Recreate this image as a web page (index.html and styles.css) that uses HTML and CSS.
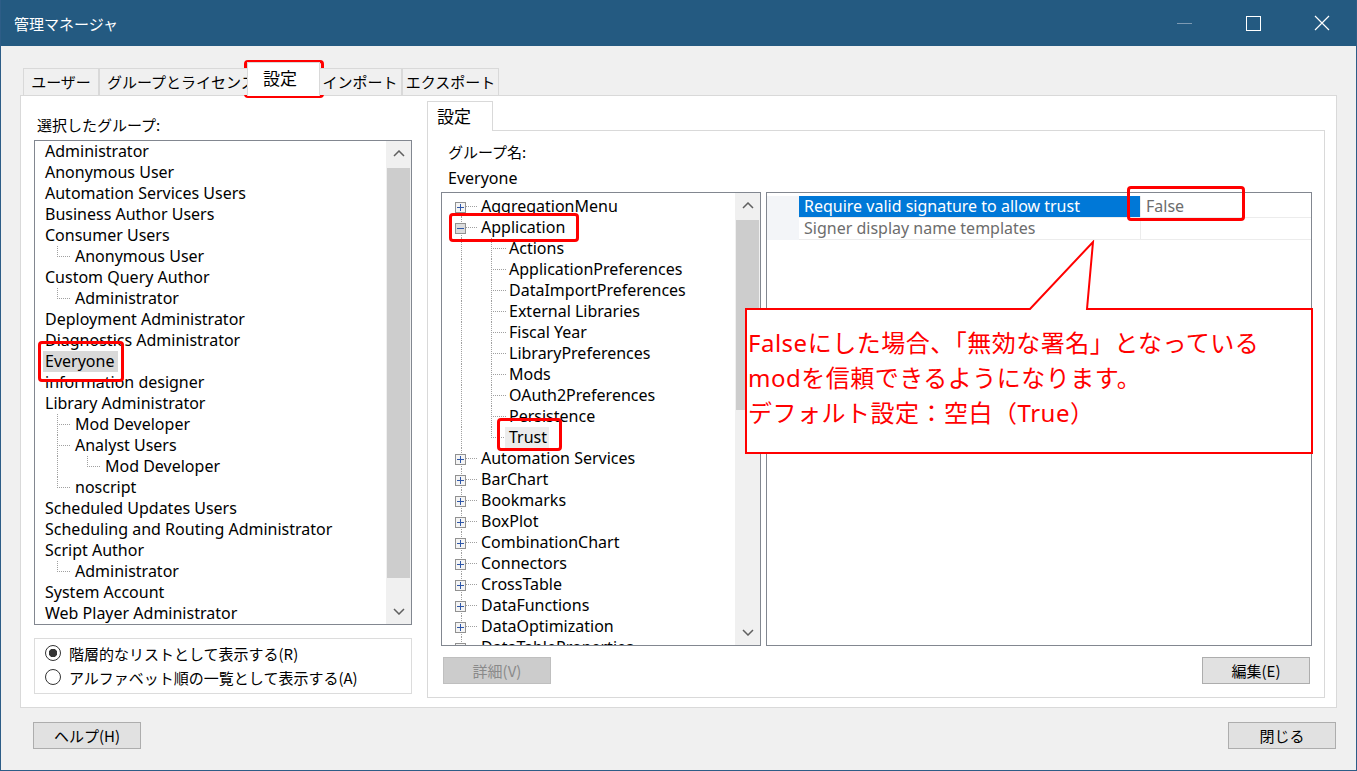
FILE: index.html
```html
<!DOCTYPE html>
<html lang="ja">
<head>
    <meta charset="UTF-8">
    <title>管理マネージャ</title>
    <link rel="stylesheet" href="styles.css">
</head>
<body>

<div class="window">

    <div class="titlebar">
        <span class="title">管理マネージャ</span>
        <div class="winbtns">
            <span class="wb"><svg width="16" height="16" viewBox="0 0 16 16"><path d="M1 8.5 H16" stroke="#7d9ab3" stroke-width="1"/></svg></span>
            <span class="wb"><svg width="16" height="16" viewBox="0 0 16 16"><rect x="1.5" y="1.5" width="14" height="14" fill="none" stroke="#fff" stroke-width="1"/></svg></span>
            <span class="wb"><svg width="16" height="16" viewBox="0 0 16 16"><path d="M1 1 L15 15 M15 1 L1 15" stroke="#fff" stroke-width="1.2"/></svg></span>
        </div>
    </div>

    <div class="content">

        <div class="tabs">
            <div class="tab tab-user">ユーザー</div>
            <div class="tab tab-group">グループとライセンス</div>
            <div class="tab active">設定</div>
            <div class="tab tab-import">インポート</div>
            <div class="tab tab-export">エクスポート</div>
        </div>

        <div class="panel">

            <!-- left: groups -->
            <div class="left">
                <div class="label">選択したグループ:</div>
                <div class="listbox">
                    <div class="list">
                        <div class="row">Administrator</div>
                        <div class="row">Anonymous User</div>
                        <div class="row">Automation Services Users</div>
                        <div class="row">Business Author Users</div>
                        <div class="row">Consumer Users</div>
                        <div class="row"><span class="lc lc-ell"></span>Anonymous User</div>
                        <div class="row">Custom Query Author</div>
                        <div class="row"><span class="lc lc-ell"></span>Administrator</div>
                        <div class="row">Deployment Administrator</div>
                        <div class="row">Diagnostics Administrator</div>
                        <div class="row"><span class="hl">Everyone</span></div>
                        <div class="row">information designer</div>
                        <div class="row">Library Administrator</div>
                        <div class="row"><span class="lc lc-tee"></span>Mod Developer</div>
                        <div class="row"><span class="lc lc-tee"></span>Analyst Users</div>
                        <div class="row"><span class="lc lc-bar"></span><span class="lc lc-ell"></span>Mod Developer</div>
                        <div class="row"><span class="lc lc-ell"></span>noscript</div>
                        <div class="row">Scheduled Updates Users</div>
                        <div class="row">Scheduling and Routing Administrator</div>
                        <div class="row">Script Author</div>
                        <div class="row"><span class="lc lc-ell"></span>Administrator</div>
                        <div class="row">System Account</div>
                        <div class="row">Web Player Administrator</div>
                    </div>
                    <div class="vscroll">
                        <div class="sb-btn"><svg width="12" height="7" viewBox="0 0 12 7"><path d="M1 6 L6 1 L11 6" fill="none" stroke="#606060" stroke-width="1.5"/></svg></div>
                        <div class="sb-track"><div class="sb-thumb thumb-groups"></div></div>
                        <div class="sb-btn"><svg width="12" height="7" viewBox="0 0 12 7"><path d="M1 1 L6 6 L11 1" fill="none" stroke="#606060" stroke-width="1.5"/></svg></div>
                    </div>
                </div>
                <div class="radios">
                    <div class="radio"><span class="dot checked"></span>階層的なリストとして表示する(R)</div>
                    <div class="radio"><span class="dot"></span>アルファベット順の一覧として表示する(A)</div>
                </div>
            </div>

            <!-- right: settings -->
            <div class="right">
                <div class="subtabs">
                    <div class="subtab">設定</div>
                </div>
                <div class="subpanel">
                    <div class="field-label">グループ名:</div>
                    <div class="field-value">Everyone</div>

                    <div class="split">
                        <div class="treebox">
                            <div class="tree">
                                <div class="trow"><span class="tc tc-first"><span class="exp plus"></span></span>AggregationMenu</div>
                                <div class="trow"><span class="tc"><span class="exp minus"></span></span>Application</div>
                                <div class="trow"><span class="tc tc-bar"></span><span class="tb tb-tee"></span>Actions</div>
                                <div class="trow"><span class="tc tc-bar"></span><span class="tb tb-tee"></span>ApplicationPreferences</div>
                                <div class="trow"><span class="tc tc-bar"></span><span class="tb tb-tee"></span>DataImportPreferences</div>
                                <div class="trow"><span class="tc tc-bar"></span><span class="tb tb-tee"></span>External Libraries</div>
                                <div class="trow"><span class="tc tc-bar"></span><span class="tb tb-tee"></span>Fiscal Year</div>
                                <div class="trow"><span class="tc tc-bar"></span><span class="tb tb-tee"></span>LibraryPreferences</div>
                                <div class="trow"><span class="tc tc-bar"></span><span class="tb tb-tee"></span>Mods</div>
                                <div class="trow"><span class="tc tc-bar"></span><span class="tb tb-tee"></span>OAuth2Preferences</div>
                                <div class="trow"><span class="tc tc-bar"></span><span class="tb tb-tee"></span>Persistence</div>
                                <div class="trow"><span class="tc tc-bar"></span><span class="tb tb-ell"></span><span class="hl-tree">Trust</span></div>
                                <div class="trow"><span class="tc"><span class="exp plus"></span></span>Automation Services</div>
                                <div class="trow"><span class="tc"><span class="exp plus"></span></span>BarChart</div>
                                <div class="trow"><span class="tc"><span class="exp plus"></span></span>Bookmarks</div>
                                <div class="trow"><span class="tc"><span class="exp plus"></span></span>BoxPlot</div>
                                <div class="trow"><span class="tc"><span class="exp plus"></span></span>CombinationChart</div>
                                <div class="trow"><span class="tc"><span class="exp plus"></span></span>Connectors</div>
                                <div class="trow"><span class="tc"><span class="exp plus"></span></span>CrossTable</div>
                                <div class="trow"><span class="tc"><span class="exp plus"></span></span>DataFunctions</div>
                                <div class="trow"><span class="tc"><span class="exp plus"></span></span>DataOptimization</div>
                                <div class="trow"><span class="tc"><span class="exp plus"></span></span>DataTableProperties</div>
                            </div>
                            <div class="vscroll">
                                <div class="sb-btn"><svg width="12" height="7" viewBox="0 0 12 7"><path d="M1 6 L6 1 L11 6" fill="none" stroke="#606060" stroke-width="1.5"/></svg></div>
                                <div class="sb-track"><div class="sb-thumb thumb-tree"></div></div>
                                <div class="sb-btn"><svg width="12" height="7" viewBox="0 0 12 7"><path d="M1 1 L6 6 L11 1" fill="none" stroke="#606060" stroke-width="1.5"/></svg></div>
                            </div>
                        </div>

                        <div class="grid">
                            <div class="prow">
                                <span class="gutter"></span>
                                <span class="pname selected">Require valid signature to allow trust</span>
                                <span class="pval">False</span>
                            </div>
                            <div class="prow">
                                <span class="gutter"></span>
                                <span class="pname">Signer display name templates</span>
                                <span class="pval"></span>
                            </div>
                        </div>
                    </div>

                    <div class="btnrow">
                        <button class="btn" disabled>詳細(V)</button>
                        <button class="btn">編集(E)</button>
                    </div>
                </div>
            </div>

        </div>

        <div class="footer">
            <button class="btn">ヘルプ(H)</button>
            <button class="btn">閉じる</button>
        </div>

    </div>

    <!-- annotations -->
    <div class="mark mark-tab"></div>
    <div class="mark mark-everyone"></div>
    <div class="mark mark-app"></div>
    <div class="mark mark-trust"></div>
    <div class="mark mark-false"></div>

    <div class="callout">
        <svg class="callout-shape" width="570" height="216" viewBox="0 0 570 216">
            <path d="M1 69 H285 L348 2 L342 69 H567 V213 H1 Z" fill="#fff" stroke="#ff0000" stroke-width="2"/>
        </svg>
        <div class="callout-text">
            Falseにした場合、「無効な署名」となっている<br>
            modを信頼できるようになります。<br>
            デフォルト設定：空白（True）
        </div>
    </div>

</div>

</body>
</html>
```

FILE: styles.css
```css
body {
    margin: 0;
    background-color: #ffffff;
    font-family: "Noto Sans", "Noto Sans CJK JP", sans-serif;
    color: #000;
}

.window {
    position: relative;
    width: 1357px;
    height: 771px;
    box-sizing: border-box;
    border: 1px solid #2d5d87;
    border-top: none;
    background-color: #f0f0f0;
    display: flex;
    flex-direction: column;
}

/* title bar */
.titlebar {
    height: 46px;
    flex-shrink: 0;
    background-color: #245a81;
    color: #ffffff;
    display: flex;
    align-items: center;
}

.title {
    padding-left: 13px;
    font-size: 15px;
    font-family: "Noto Sans CJK JP", sans-serif;
}

.winbtns {
    margin-left: auto;
    display: flex;
}

.wb {
    width: 69px;
    height: 46px;
    display: flex;
    align-items: center;
    justify-content: center;
}

/* main area */
.content {
    flex: 1;
    padding: 16px 19px 0 19px;
    display: flex;
    flex-direction: column;
}

.tabs {
    height: 33px;
    margin-left: 3px;
    display: flex;
    align-items: flex-end;
    position: relative;
    z-index: 1;
}

.tab {
    height: 27px;
    box-sizing: border-box;
    border: 1px solid #d9d9d9;
    border-bottom: none;
    background-color: #f0f0f0;
    font-size: 15px;
    line-height: 25px;
    text-align: center;
    white-space: nowrap;
    overflow: hidden;
    font-family: "Noto Sans CJK JP", sans-serif;
}

.tab-user { width: 76px; }
.tab-group { width: 150px; text-align: left; padding-left: 7px; }
.tab-import { width: 84px; }
.tab-export { width: 97px; }

.tab.active {
    width: 73px;
    height: 34px;
    margin: 0 -2px -1px -2px;
    background-color: #ffffff;
    line-height: 30px;
    font-size: 17px;
    text-align: left;
    padding-left: 15px;
    position: relative;
    z-index: 2;
}

.panel {
    height: 613px;
    box-sizing: border-box;
    border: 1px solid #d9d9d9;
    background-color: #ffffff;
    display: flex;
    gap: 15px;
    padding: 0 11px 0 13px;
}

/* left column */
.left {
    width: 378px;
    padding-top: 18px;
    display: flex;
    flex-direction: column;
}

.label {
    font-size: 15px;
    line-height: 21px;
    padding-left: 3px;
    margin-bottom: 5px;
    font-family: "Noto Sans CJK JP", sans-serif;
}

.listbox {
    height: 485px;
    flex-shrink: 0;
    box-sizing: border-box;
    border: 1px solid #828790;
    display: flex;
}

.list {
    flex: 1;
    overflow: hidden;
}

.row {
    height: 21px;
    line-height: 21px;
    font-size: 16px;
    padding-left: 10px;
    display: flex;
    white-space: nowrap;
}

.hl {
    background-color: #d9d9d9;
    margin-left: -2px;
    padding: 0 4px 0 2px;
}

/* dotted tree lines */
.lc, .tc, .tb {
    flex-shrink: 0;
    height: 21px;
    background-repeat: no-repeat;
}

.lc { width: 30px; }

.lc-tee {
    background-image:
        repeating-linear-gradient(to bottom, #a0a0a0 0 1px, transparent 1px 2px),
        repeating-linear-gradient(to right, #a0a0a0 0 1px, transparent 1px 2px);
    background-size: 1px 21px, 13px 1px;
    background-position: 12px 0, 12px 10px;
}

.lc-ell {
    background-image:
        repeating-linear-gradient(to bottom, #a0a0a0 0 1px, transparent 1px 2px),
        repeating-linear-gradient(to right, #a0a0a0 0 1px, transparent 1px 2px);
    background-size: 1px 11px, 13px 1px;
    background-position: 12px 0, 12px 10px;
}

.lc-bar {
    background-image: repeating-linear-gradient(to bottom, #a0a0a0 0 1px, transparent 1px 2px);
    background-size: 1px 21px;
    background-position: 12px 0;
}

/* scrollbars */
.vscroll {
    width: 25px;
    flex-shrink: 0;
    background-color: #f0f0f0;
    display: flex;
    flex-direction: column;
}

.sb-btn {
    height: 25px;
    display: flex;
    align-items: center;
    justify-content: center;
}

.sb-track {
    flex: 1;
    padding: 2px 1px 0 1px;
}

.sb-thumb {
    background-color: #cdcdcd;
}

.thumb-groups { height: 410px; }
.thumb-tree { height: 190px; }

.radios {
    margin-top: 13px;
    height: 56px;
    box-sizing: border-box;
    border: 1px solid #dcdcdc;
    padding-top: 2px;
}

.radio {
    height: 24px;
    display: flex;
    align-items: center;
    gap: 8px;
    padding-left: 10px;
    font-size: 15px;
    font-family: "Noto Sans CJK JP", sans-serif;
}

.dot {
    width: 16px;
    height: 16px;
    box-sizing: border-box;
    border: 1px solid #333333;
    border-radius: 50%;
    background-color: #ffffff;
}

.dot.checked {
    background: radial-gradient(circle, #333333 0 4px, #ffffff 4.5px);
}

/* right column */
.right {
    width: 898px;
    padding-top: 5px;
    display: flex;
    flex-direction: column;
}

.subtabs {
    height: 29px;
    display: flex;
    align-items: flex-end;
}

.subtab {
    width: 66px;
    height: 30px;
    box-sizing: border-box;
    margin-bottom: -1px;
    border: 1px solid #d9d9d9;
    border-bottom: none;
    background-color: #ffffff;
    font-size: 17px;
    line-height: 28px;
    padding-left: 9px;
    position: relative;
    z-index: 1;
    font-family: "Noto Sans CJK JP", sans-serif;
}

.subpanel {
    height: 568px;
    box-sizing: border-box;
    border: 1px solid #d9d9d9;
    background-color: #ffffff;
    padding: 10px 12px 0 13px;
}

.field-label {
    font-size: 15px;
    line-height: 21px;
    padding-left: 7px;
    margin-bottom: 6px;
    font-family: "Noto Sans CJK JP", sans-serif;
}

.field-value {
    font-size: 16px;
    line-height: 21px;
    padding-left: 7px;
    margin-bottom: 3px;
}

.split {
    height: 454px;
    display: flex;
    gap: 5px;
}

.treebox {
    width: 320px;
    box-sizing: border-box;
    border: 1px solid #828790;
    display: flex;
}

.tree {
    flex: 1;
    padding-top: 3px;
    overflow: hidden;
}

.trow {
    height: 21px;
    line-height: 21px;
    font-size: 16px;
    display: flex;
    white-space: nowrap;
}

.tc {
    width: 39px;
    display: flex;
    align-items: center;
    background-image:
        repeating-linear-gradient(to bottom, #a0a0a0 0 1px, transparent 1px 2px),
        repeating-linear-gradient(to right, #a0a0a0 0 1px, transparent 1px 2px);
    background-size: 1px 21px, 12px 1px;
    background-position: 19px 0, 24px 10px;
}

.tc-first {
    background-size: 1px 11px, 12px 1px;
    background-position: 19px 10px, 24px 10px;
}

.tc-bar {
    background-image: repeating-linear-gradient(to bottom, #a0a0a0 0 1px, transparent 1px 2px);
    background-size: 1px 21px;
    background-position: 19px 0;
}

.tb {
    width: 28px;
    background-image:
        repeating-linear-gradient(to bottom, #a0a0a0 0 1px, transparent 1px 2px),
        repeating-linear-gradient(to right, #a0a0a0 0 1px, transparent 1px 2px);
    background-size: 1px 21px, 15px 1px;
    background-position: 10px 0, 10px 10px;
}

.tb-ell {
    background-size: 1px 11px, 15px 1px;
}

.exp {
    width: 11px;
    height: 11px;
    box-sizing: border-box;
    margin-left: 13px;
    margin-top: 2px;
    border: 1px solid #919191;
    background-color: #f4f4f4;
    background-repeat: no-repeat;
    background-position: center;
}

.exp.plus {
    background-image: linear-gradient(#2f57a8, #2f57a8), linear-gradient(#2f57a8, #2f57a8);
    background-size: 7px 1px, 1px 7px;
}

.exp.minus {
    background-color: #dcdcdc;
    background-image: linear-gradient(#2f57a8, #2f57a8);
    background-size: 7px 1px;
}

.hl-tree {
    background-color: #ececec;
    margin-left: -4px;
    padding: 0 2px 0 4px;
}

/* property grid */
.grid {
    flex: 1;
    box-sizing: border-box;
    border: 1px solid #828790;
    background-color: #ffffff;
    padding-top: 3px;
}

.prow {
    height: 22px;
    display: flex;
    font-size: 16px;
    line-height: 21px;
    white-space: nowrap;
}

.gutter {
    width: 32px;
    background-color: #f3f5f8;
}

.pname {
    width: 341px;
    box-sizing: border-box;
    padding-left: 5px;
    color: #6d6d6d;
    border-bottom: 1px solid #ececec;
}

.pname.selected {
    background-color: #0078d7;
    color: #ffffff;
}

.pval {
    flex: 1;
    padding-left: 5px;
    color: #6d6d6d;
    border-left: 1px solid #ececec;
    border-bottom: 1px solid #ececec;
}

.btnrow {
    margin-top: 11px;
    padding: 0 2px;
    display: flex;
    justify-content: space-between;
}

.btn {
    width: 108px;
    height: 27px;
    box-sizing: border-box;
    border: 1px solid #adadad;
    background-color: #e1e1e1;
    font-size: 15px;
    font-family: "Noto Sans CJK JP", sans-serif;
    color: #000;
    padding: 0;
}

.btn:disabled {
    background-color: #cccccc;
    border-color: #bfbfbf;
    color: #8a8a8a;
}

.footer {
    margin-top: 14px;
    padding: 0 1px 0 13px;
    display: flex;
    justify-content: space-between;
}

/* red annotation boxes */
.mark {
    position: absolute;
    box-sizing: border-box;
    border: 3px solid #ff0000;
    border-radius: 4px;
}

.mark-tab { left: 243px; top: 60px; width: 80px; height: 38px; }
.mark-everyone { left: 37px; top: 341px; width: 86px; height: 41px; }
.mark-app { left: 448px; top: 213px; width: 130px; height: 29px; }
.mark-trust { left: 496px; top: 418px; width: 65px; height: 33px; }
.mark-false { left: 1126px; top: 186px; width: 118px; height: 35px; }

/* callout */
.callout {
    position: absolute;
    left: 744px;
    top: 240px;
    width: 570px;
    height: 216px;
}

.callout-shape {
    position: absolute;
    left: 0;
    top: 0;
}

.callout-text {
    position: relative;
    padding: 85px 0 0 3px;
    font-size: 24px;
    letter-spacing: 0.5px;
    line-height: 35px;
    color: #ff0000;
    white-space: nowrap;
}
```
